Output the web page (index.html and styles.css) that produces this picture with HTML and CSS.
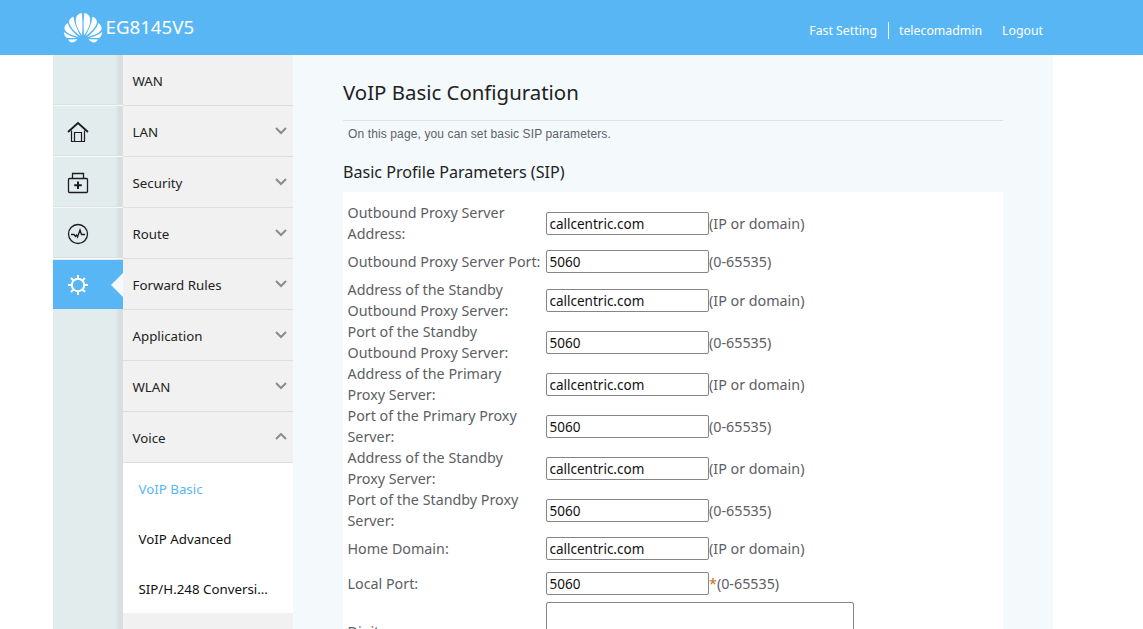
FILE: index.html
```
<!DOCTYPE html>
<html lang="en">
<head>
<meta charset="utf-8">
<title>EG8145V5</title>
<link rel="stylesheet" href="styles.css">
</head>

<body>
<div id="header" class="header">
	<div class="header_main">
		<svg class="logo" width="40" height="32" viewBox="0 0 40 32">
			<g fill="#fff">
				<path d="M19 23.500C14.500 17 12 11 13 6C13.800 3 16 1.500 18.800 1C19.600 8 19.600 16 19 23.500Z"/>
				<path d="M17.500 24C10.500 19 6.500 14 6 10C6 7.500 8 5.500 10.500 4.500C11 11 14 17 17.500 24Z"/>
				<path d="M15.500 25C8.500 23.500 2.500 20.500 1.500 17C1 14.500 2.500 12.500 4.500 11C6.500 16.500 10.500 20.500 15.500 25Z"/>
				<path d="M.8 20C5 23 9 24.700 14 26L3.800 26C2 24.500 1 22.500 .8 20Z"/>
				<path d="M5 27.500L14.500 27.300C13 29 11 30.500 9 30.500C7 30.500 6 29 5 27.500Z"/>
				<path d="M21 23.500C25.500 17 28 11 27 6C26.200 3 24 1.500 21.200 1C20.400 8 20.400 16 21 23.500Z"/>
				<path d="M22.500 24C29.500 19 33.500 14 34 10C34 7.500 32 5.500 29.500 4.500C29 11 26 17 22.500 24Z"/>
				<path d="M24.500 25C31.500 23.500 37.500 20.500 38.500 17C39 14.500 37.500 12.500 35.500 11C33.500 16.500 29.500 20.500 24.500 25Z"/>
				<path d="M39.200 20C35 23 31 24.700 26 26L36.200 26C38 24.500 39 22.500 39.200 20Z"/>
				<path d="M35 27.500L25.500 27.300C27 29 29 30.500 31 30.500C33 30.500 34 29 35 27.500Z"/>
			</g>
		</svg>
		<span class="product">EG8145V5</span>
		<div class="links">
			<a href="#" class="fast">Fast Setting</a>
			<a href="#" class="user">telecomadmin</a>
			<a href="#" class="logout">Logout</a>
		</div>
	</div>
</div>
<div class="center">
	<ul class="icons">
		<li></li>
		<li>
			<svg width="22" height="22" viewBox="0 0 22 22" fill="none" stroke="#1c1c24">
				<path d="M1 11L11 2L21 11" stroke-width="1.800"/>
				<path d="M4.500 9.500V20.500H17.500V9.500M7.500 20.500V11.500H14.500V20.500" stroke-width="1.200"/>
			</svg>
		</li>
		<li>
			<svg width="22" height="22" viewBox="0 0 22 22" fill="none" stroke="#1c1c24" stroke-width="1.300">
				<rect x="1.500" y="6.500" width="19" height="14" rx="1"/>
				<path d="M5.500 6.500V1.500H16.500V6.500"/>
				<path d="M11 9.500V17M7.200 13.250H14.800" stroke-width="2"/>
			</svg>
		</li>
		<li>
			<svg width="22" height="22" viewBox="0 0 22 22" fill="none" stroke="#1c1c24" stroke-width="1.300">
				<circle cx="11" cy="11" r="9.500"/>
				<path d="M4 11.500H7L8.500 13.500L9.500 12L10.500 14L13 7L14.500 11.500H18"/>
			</svg>
		</li>
		<li class="active">
			<svg width="22" height="22" viewBox="0 0 22 22" fill="none" stroke="#fff" stroke-width="2">
				<circle cx="11" cy="11" r="6.200"/>
				<path d="M11 1V4.500M11 17.500V21M1 11H4.500M17.500 11H21M4 4L6.500 6.500M15.500 15.500L18 18M18 4L15.500 6.500M6.500 15.500L4 18"/>
			</svg>
		</li>
	</ul>
	<div class="menu">
		<ul>
			<li><a href="#">WAN</a></li>
			<li><a href="#">LAN</a><svg class="arrow" width="12" height="8"><path d="M1 1L6 6L11 1"/></svg></li>
			<li><a href="#">Security</a><svg class="arrow" width="12" height="8"><path d="M1 1L6 6L11 1"/></svg></li>
			<li><a href="#">Route</a><svg class="arrow" width="12" height="8"><path d="M1 1L6 6L11 1"/></svg></li>
			<li><a href="#">Forward Rules</a><svg class="arrow" width="12" height="8"><path d="M1 1L6 6L11 1"/></svg></li>
			<li><a href="#">Application</a><svg class="arrow" width="12" height="8"><path d="M1 1L6 6L11 1"/></svg></li>
			<li><a href="#">WLAN</a><svg class="arrow" width="12" height="8"><path d="M1 1L6 6L11 1"/></svg></li>
			<li><a href="#">Voice</a><svg class="arrow" width="12" height="8"><path d="M1 6L6 1L11 6"/></svg></li>
		</ul>
		<div class="submenu">
			<a href="#" class="on">VoIP Basic</a>
			<a href="#">VoIP Advanced</a>
			<a href="#">SIP/H.248 Conversi...</a>
		</div>
	</div>
	<div class="content">
		<h1>VoIP Basic Configuration</h1>
		<p class="summary">On this page, you can set basic SIP parameters.</p>
		<h2>Basic Profile Parameters (SIP)</h2>
		<form class="panel">
			<div class="row two"><label>Outbound Proxy Server Address:</label><input type="text" value="callcentric.com"><span>(IP or domain)</span></div>
			<div class="row"><label>Outbound Proxy Server Port:</label><input type="text" value="5060"><span>(0-65535)</span></div>
			<div class="row two"><label>Address of the Standby Outbound Proxy Server:</label><input type="text" value="callcentric.com"><span>(IP or domain)</span></div>
			<div class="row two"><label>Port of the Standby Outbound Proxy Server:</label><input type="text" value="5060"><span>(0-65535)</span></div>
			<div class="row two"><label>Address of the Primary<br>Proxy Server:</label><input type="text" value="callcentric.com"><span>(IP or domain)</span></div>
			<div class="row two"><label>Port of the Primary Proxy Server:</label><input type="text" value="5060"><span>(0-65535)</span></div>
			<div class="row two"><label>Address of the Standby Proxy Server:</label><input type="text" value="callcentric.com"><span>(IP or domain)</span></div>
			<div class="row two"><label>Port of the Standby Proxy Server:</label><input type="text" value="5060"><span>(0-65535)</span></div>
			<div class="row"><label>Home Domain:</label><input type="text" value="callcentric.com"><span>(IP or domain)</span></div>
			<div class="row"><label>Local Port:</label><input type="text" value="5060"><span><em>*</em>(0-65535)</span></div>
			<div class="row map"><label>Digitmap:</label><textarea></textarea></div>
		</form>
	</div>
</div>
</body>
</html>
```
FILE: styles.css
```
*{ padding:0; margin:0; box-sizing:border-box;}
ul{ list-style:none;}
a{ text-decoration:none;}
html,body{ height:100%;}
body{ background:#fff; font-family:"Noto Sans","Open Sans",sans-serif; font-size:14px; overflow:hidden;}

/*header*/
.header{ background:#59b6f5; height:55px;}
.header_main{ display:flex; width:1037px; margin-left:53px; padding-left:10px; height:55px;}
.logo{ margin-top:12px;}
.product{ margin-left:2.500px; color:#fff; font-size:18.700px; line-height:53px;}
.links{ display:flex; align-items:flex-start; margin-left:auto; margin-right:47px; padding-top:22px; font-size:12.300px; line-height:17px;}
.links a{ color:#fff; white-space:nowrap;}
.links .fast{ border-right:1px solid #fff; padding-right:11px;}
.links .user{ padding-left:10px;}
.links .logout{ padding-left:20px;}

.center{ display:flex; width:1000px; height:574px; margin-left:53px; background:#f4f9fc;}

/*first level*/
.icons{ width:70px; background:linear-gradient(to right,#e2ecec 0,#e2ecec 62px,#d9dfe0 66px,#d9dfe0 100%);}
.icons li{ height:51px; padding:15px 0 0 14px; border-bottom:1px solid #f4f8f8; box-shadow:inset 0 -1px #d9e1e1;}
.icons .active{ position:relative; height:49px; padding-top:14px; margin-top:1px; background:#59b6f5; border:0; box-shadow:none;}
.icons .active:after{ content:""; position:absolute; right:0; top:13px; border:12px solid transparent; border-right-color:#f4f9fc; border-left:0;}

/*second level*/
.menu{ width:170px; background:#f1f1f1;}
.menu li{ display:flex; justify-content:space-between; height:51px; padding:0 6px 0 9.500px; border-bottom:1px solid #dcdfe0;}
.menu li a{ color:#222; font-size:13.300px; line-height:53px;}
.arrow{ margin-top:21px; fill:none; stroke:#8a8c8e; stroke-width:2;}
.submenu{ height:150px; background:#fff;}
.submenu a{ display:block; height:50px; padding-left:15.500px; color:#111; font-size:13.300px; line-height:52px; white-space:nowrap;}
.submenu .on{ color:#59b6f5;}

/*page*/
.content{ width:710px; padding:0 0 0 50px; margin-right:50px;}
h1{ height:66px; padding-top:22px; border-bottom:1px solid #dce2e5; color:#222; font-size:20.400px; font-weight:normal; line-height:30px;}
.summary{ padding-left:5px; color:#5c6366; font:12px/26px "Liberation Sans",Arial,sans-serif; letter-spacing:.12px;}
h2{ height:45px; padding-top:13px; color:#222; font-size:16.100px; font-weight:normal; line-height:24px;}
.panel{ height:440px; padding:10px 0 0 4.500px; background:#fff; overflow:hidden;}
.row{ display:flex; align-items:center; height:35px; color:#5c6063; font-size:14.300px; line-height:21px;}
.two{ height:42px;}
.row label{ width:198.500px; padding-right:3px;}
.row input{ width:163px; height:23px; padding:1px 3px 0 2.500px; border:1px solid #858589; border-radius:2px; background:#fff; color:#111; font:13.500px "Noto Sans","Open Sans",sans-serif;}
.row em{ color:#c96b1c; font-style:normal;}
.map{ height:60px;}
.map textarea{ width:308px; height:59px; border:1px solid #858589; border-radius:2px; resize:none;}
```
